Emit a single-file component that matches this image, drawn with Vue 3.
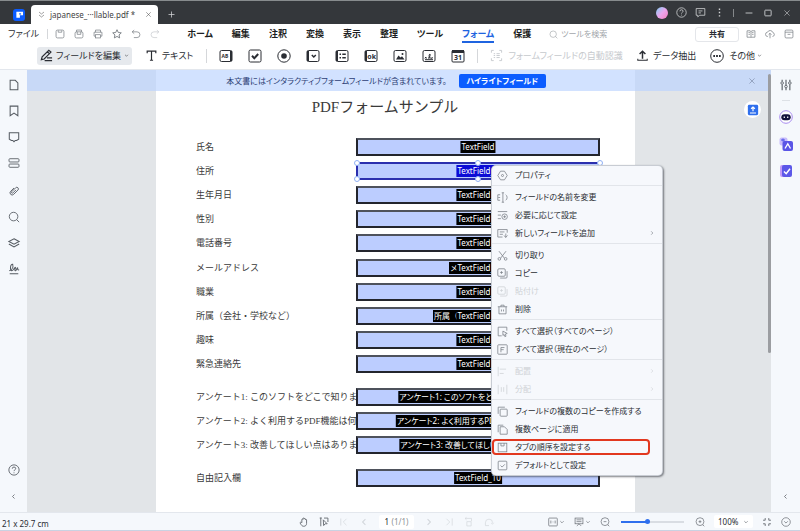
<script setup>
import { h, ref } from 'vue'

const icons = {
  logo: '<path fill="#fff" stroke="none" d="M3 3.500h8.500v4.500H7.500v3H3z"/><path fill="#0b5cff" stroke="none" d="M6.500 5.500h2.500v1.500h-2.500z"/>',
  pin: '<path d="M2 2l5 4 5-4M2 8l5 4 5-4"/>',
  close: '<path d="M2.500 2.500l9 9M11.500 2.500l-9 9"/>',
  plus: '<path stroke-width="1.500" d="M7 1v12M1 7h12"/>',
  save: '<rect x="1.500" y="1.500" width="11" height="11" rx="2"/><path d="M4.500 2v2.500h5V2"/>',
  saveAs: '<path d="M3.500 4V1.500h7V4"/><rect x="1.500" y="4" width="11" height="8.500" rx="2"/><path d="M4.500 4v3.500h5V4"/>',
  print: '<path d="M3.500 4.500v-3h7v3M3.500 10h-2V4.500h11V10h-2"/><rect x="3.500" y="8" width="7" height="4.500"/>',
  star: '<path stroke-width="1.300" d="M7 1l1.800 3.900 4.200.500-3.100 2.900.800 4.200L7 10.400l-3.700 2.100.800-4.200L1 5.400l4.200-.500z"/>',
  undo: '<path d="M4.500 1.500L1.500 4l3 2.500M2 4h6.500a4 4 0 010 8H4"/>',
  redo: '<path d="M9.500 1.500l3 2.500-3 2.500M12 4H5.500a4 4 0 000 8H10"/>',
  search: '<circle cx="6.500" cy="6.500" r="5"/><path d="M10 10l3 3"/>',
  help: '<circle cx="7" cy="7" r="6"/><path d="M5 5.500a2 2 0 114 0c0 1.200-2 1.300-2 2.800M7 9.800v1"/>',
  comment: '<path d="M1.500 2h11v8.500H6L3.500 12.500v-2h-2z"/><path d="M4.500 5h5M4.500 7.500h3"/>',
  dots: '<path stroke-width="1.800" d="M7 2v1.800M7 6.200V8M7 10.400v1.800"/>',
  minimize: '<path stroke-width="1.500" d="M1 7h12"/>',
  maximize: '<rect x="1.500" y="2" width="11" height="10" rx="1" stroke-width="1.500"/>',
  book: '<path d="M7 3v8.500M1.500 2.500H6L7 3.500l1-1h4.500v9H8l-1 .8-1-.8H1.500zM3.500 5h2M3.500 7.500h2M8.500 5h2M8.500 7.500h2"/>',
  cloud: '<path d="M4 10.500a3 3 0 01-.500-6 4 4 0 017.500.500 2.800 2.800 0 01-.500 5.500M7 6v7M5 8l2-2 2 2"/>',
  archive: '<rect x="1.500" y="1.500" width="11" height="11" rx="1.500"/><path d="M1.500 4.500h11M5 7.500h4"/>',
  pen: '<path stroke-width="1.300" d="M1.500 11.500l.8-3L9.500 1.300l2.300 2L4.500 10.800zM8 3l2.200 2.200M7.500 9.500H13M5 12.500h8"/>',
  text: '<path stroke-width="1.500" d="M1.500 4V1.500h11V4M7 1.500v11.500M5 13h4"/>',
  textField: '<rect x="1" y="1.500" width="12" height="11" rx="1.500"/><path stroke-width="2" d="M12 2v10"/><text x="6" y="9.200" text-anchor="middle" font-size="5" font-weight="700" fill="currentColor" stroke="none">AB</text>',
  checkbox: '<rect x="1" y="1" width="12" height="12" rx="1.500"/><path stroke-width="2" d="M4 6.800l2.300 2.400L10.200 5"/>',
  radio: '<circle cx="7" cy="7" r="6.200"/><circle cx="7" cy="7" r="2.800" fill="currentColor" stroke="none"/>',
  dropdown: '<rect x="1" y="1.500" width="12" height="11" rx="1.500"/><path stroke-width="2" d="M2 2v10"/><path stroke-width="1.500" d="M5.800 6l2 2 2-2"/>',
  list: '<rect x="1" y="1.500" width="12" height="11" rx="1.500"/><path stroke-width="2" d="M2 2v10"/><path stroke-width="1.500" d="M4.500 5.300H6M7.300 5.300h3.500M4.500 8.800H6M7.300 8.800h3.500"/>',
  button: '<rect x="1" y="1.500" width="12" height="11" rx="1.500"/><path stroke-width="2" d="M2 2v10"/><text x="7.700" y="9.700" text-anchor="middle" font-size="7" font-weight="700" fill="currentColor" stroke="none">ok</text>',
  image: '<rect x="1" y="1.500" width="12" height="11" rx="1.500"/><path fill="currentColor" stroke="none" d="M3 10.500l2.500-4 2 2 1.500-1.200 2.500 3.200z"/><circle cx="9.500" cy="5" r="1" fill="currentColor" stroke="none"/>',
  sign: '<rect x="1" y="1.500" width="12" height="11" rx="1.500"/><path d="M3 8l1.500 1.500M4.500 8L3 9.500M6 9.500c1.500-1 2.500-3 2-4.500-1 0-1.300 3 0 4.500 1-1.500 1.500-1 1.500 0l1.500-1M3 10.700h8"/>',
  date: '<rect x="1" y="1.500" width="12" height="11.500" rx="1"/><path stroke-width="3" d="M1 2.500h12"/><text x="7" y="11.300" text-anchor="middle" font-size="7" font-weight="700" fill="currentColor" stroke="none">31</text>',
  scan: '<path d="M1.500 4V1.500H4M10 1.500h2.500V4M12.500 10v2.500H10M4 12.500H1.500V10M4 5h1.500M7 5h3.500M4 7h1.500M7 7h3.500M4 9.200h1.500M7 9.200h3.500"/>',
  extract: '<path stroke-width="1.900" d="M7 11V1.800M3.300 5L7 1.500 10.700 5"/><path stroke-width="1.300" d="M1 11v2h12v-2"/>',
  more: '<circle cx="7" cy="7" r="6.300"/><path stroke-width="1.800" d="M3.300 7H5M6.100 7h1.800M9 7h1.700"/>',
  chevron: '<path stroke-width="1.500" d="M3 5l4 4 4-4"/>',
  right: '<path stroke-width="1.500" d="M5 3l4 4-4 4"/>',
  left: '<path stroke-width="1.500" d="M9 3L5 7l4 4"/>',
  page: '<path stroke-width="1.200" d="M2.500 1.500h6l3 3v8h-9z"/>',
  bookmark: '<path stroke-width="1.200" d="M2.500 1.300h9v11.200L7 9.500l-4.500 3z"/>',
  note: '<path stroke-width="1.200" d="M1.500 2h11v7.500L10 11H8.500L7 12.500 5.500 11H4L1.500 9.500z"/>',
  fields: '<rect x="1.200" y="2" width="11.600" height="3.800" rx="1"/><rect x="1.200" y="8.200" width="11.600" height="3.800" rx="1"/>',
  clip: '<g transform="rotate(45 7 7)"><path d="M4.500 4.500v5.500a2.500 2.500 0 005 0V3a1.900 1.900 0 00-3.800 0v6.500a1 1 0 002 0V4.500"/></g>',
  layers: '<path stroke-width="1.200" d="M7 2l6 3.200-6 3.200-6-3.200zM1 8.200l6 3.300 6-3.300"/>',
  scribble: '<path stroke-width="1.200" d="M1.500 9c3-1 5-4 4-7.500-3-.5-3.500 7-1 7.500 2 0 3-4 4-4s-1.500 3.500 0 4 1.500-3.500 2.500-3.500-1 3 2 2.500M2 12.500h10"/>',
  sliders: '<path stroke-width="1.300" d="M2.500 1v2M2.500 6.500V13M7 1v6M7 10.500V13M11.500 1v2M11.500 6.500V13"/><circle cx="2.500" cy="4.700" r="1.500"/><circle cx="7" cy="8.800" r="1.500"/><circle cx="11.500" cy="4.700" r="1.500"/>',
  robot: '<circle cx="7" cy="7" r="6.300" fill="#fff" stroke="#a88cf0"/><rect x="2.300" y="4.200" width="9.400" height="6" rx="3" fill="#12123c" stroke="none"/><path stroke="#fff" stroke-width="1.200" d="M5.300 6.500v1.500M8.700 6.500v1.500"/>',
  translate: '<rect x="0.500" y="0.500" width="8" height="8" rx="2" fill="#c9bdfb" stroke="none"/><rect x="3.500" y="4" width="10.500" height="10" rx="2" fill="#5a55e6" stroke="none"/><path stroke="#fff" stroke-width="1.300" d="M6 11.500L8.800 6.800l2.700 4.700"/><path stroke="#4a52e8" d="M2 3h4M4 1.500v3"/>',
  task: '<rect x="1" y="1" width="10" height="12" rx="2" fill="#c29bf7" stroke="none"/><rect x="3" y="1" width="10" height="12" rx="2" fill="#5c58e8" stroke="none"/><path stroke="#fff" stroke-width="1.500" d="M5 7.500l2.200 2.200 3.800-5"/>',
  upload: '<rect x="1" y="1" width="12" height="12" rx="1.500" fill="#2f6fed" stroke="none"/><path stroke="#fff" stroke-width="1.400" d="M7 8.500V3.500M4.800 5.500L7 3.500l2.200 2M3.500 10.500h7"/>',
  props: '<path d="M4.500 1.500h5L13 7l-3.500 5.500h-5L1 7z"/><circle cx="7" cy="7" r="1.300"/>',
  rename: '<path d="M4 3.500H1v7h3M1.500 7H4M7.500 1v12M6 1h3M6 13h3M11 3.500c2.500 1 2.500 6 0 7"/>',
  required: '<path d="M1 2h12M1 6.500h4M1 11h4"/><circle cx="9.700" cy="8.500" r="3.500"/><path d="M9.700 6.800v3.400M8 8.500h3.400"/>',
  addField: '<path d="M13 6V2H1v9.500h6M3.500 5h6M3.500 8h4M9 9.500l2 2.500 2.500-2.500M11.200 7v5"/>',
  cut: '<path d="M2.500 1.500l7 9M11.500 1.500l-7 9"/><circle cx="3" cy="11.300" r="1.700"/><circle cx="11" cy="11.300" r="1.700"/>',
  copy: '<rect x="1" y="1" width="9.500" height="9.500" rx="1.500"/><path d="M5.700 4v3.500M4 5.700h3.500M12.800 4v7.500a1.300 1.300 0 01-1.300 1.300H4"/>',
  trash: '<path d="M1 3.500h12M5 3.500v-2h4v2M2.500 3.500v9h9v-9M5.700 7v2.500M8.300 7v2.500"/>',
  selectAll: '<path d="M12.500 6V1.500h-11v11H6"/><path d="M7.500 6.500l5.500 3-2.500.8 1 2.700-1.500.5-1-2.700-1.500 1.200z"/>',
  selectPage: '<rect x="1" y="1" width="12" height="12" rx="1"/><path d="M5 10.500v-6h4.500M5 7.200h3.500"/>',
  align: '<path d="M1.500 1v12M3.500 4h8M3.500 9.500h5"/>',
  distribute: '<path d="M1.500 1v12M12.500 1v12M5.500 4v6M8.500 4v6"/>',
  copies: '<rect x="4" y="4" width="9" height="9" rx="1"/><path d="M10 1.500H1.500V10"/>',
  pages: '<path d="M4 3.500h5.500L13 7v6H4zM1.500 10.500v-9H8"/>',
  tabOrder: '<rect x="1.500" y="1.500" width="11" height="11"/><path d="M5 1.500V5h4M9 1.500V5"/>',
  preset: '<rect x="1.500" y="1.500" width="11" height="11" rx="1"/><path d="M4.500 7l2 2 3.500-3.500"/>',
  hand: '<path stroke-width="1.300" d="M4 8V3.500c0-1 1.500-1 1.500 0V2.200c0-1 1.700-1 1.700 0v.6c0-1 1.700-1 1.700 0v1.200c0-1 1.700-1 1.700 0V9c0 2.500-1.500 4-4 4-2 0-3-1-5-4.500-.5-1 .8-1.800 2.400-.5z"/>',
  cursor: '<path stroke-width="1.300" d="M2.500 1v12M1 1.500h3M7 1.500h5.500V7M6 4l5.500 5.500H8.500L6.500 12z"/>',
  first: '<path d="M2.500 2v10M10.500 2.500L6 7l4.500 4.500"/>',
  last: '<path d="M11.500 2v10M3.500 2.500L8 7l-4.500 4.500"/>',
  rotateL: '<path d="M1.500 2h9v4M4 6.500h6v6H4zM3.500 0.500L1.500 2l2 2"/>',
  rotateR: '<path d="M2 8a5 5 0 0110 0M2 8v4h5M10 8.500l2 1.500 1.500-2"/>',
  fit: '<rect x="1" y="1.500" width="12" height="11" rx="1"/><path d="M4 5v4M7 6v.5M7 8v.5M10 5v4"/>',
  view: '<rect x="1.500" y="1.500" width="11" height="8"/><path d="M3.500 4h7M3.500 6.500h7M4 12.500l3-3 3 3"/>',
  zoomOut: '<circle cx="7" cy="6.500" r="5.500"/><path d="M5 6.500h4M11 11l2 2"/>',
  zoomIn: '<circle cx="7" cy="6.500" r="5.500"/><path d="M5 6.500h4M7 4.500v4M11 11l2 2"/>',
  full: '<path stroke-width="1.300" d="M1.500 4.500h3v-3M9.500 1.500v3h3M12.500 9.500h-3v3M4.500 12.500v-3h-3"/>',
  expand: '<circle cx="7" cy="7" r="6"/><path d="M4.500 6L7 8.500 9.500 6"/>',
}

const Icon = (props) => h('svg', {
  class: 'icon',
  viewBox: '0 0 14 14',
  'aria-hidden': 'true',
  innerHTML: icons[props.name],
})
Icon.props = ['name']

const quickActions = [
  { icon: 'save', label: '保存' },
  { icon: 'saveAs', label: '別名で保存' },
  { icon: 'print', label: '印刷' },
  { icon: 'star', label: 'お気に入り' },
  { icon: 'undo', label: '元に戻す' },
  { icon: 'redo', label: 'やり直し', disabled: true },
]
const tabs = ['ホーム', '編集', '注釈', '変換', '表示', '整理', 'ツール', 'フォーム', '保護']
const activeTab = ref('フォーム')
const fieldTools = ['textField', 'checkbox', 'radio', 'dropdown', 'list', 'button', 'image', 'sign', 'date']
const sideGroups = [
  ['page', 'bookmark', 'note', 'fields'],
  ['clip', 'search', 'layers', 'scribble'],
]

const groups = [
  [
    { label: '氏名', tag: 'TextField' },
    { label: '住所', tag: 'TextField_2', selected: true },
    { label: '生年月日', tag: 'TextField_3' },
    { label: '性別', tag: 'TextField_4' },
    { label: '電話番号', tag: 'TextField_5' },
  ],
  [
    { label: 'メールアドレス', tag: 'TextField_6', back: 'メールアドレス' },
    { label: '職業', tag: 'TextField_7' },
    { label: '所属（会社・学校など）', tag: 'TextField_8', back: '所属（会社・学校など）' },
    { label: '趣味', tag: 'TextField_9' },
    { label: '緊急連絡先', tag: 'TextField_1' },
  ],
  [
    { label: 'アンケート1: このソフトをどこで知りましたか？', tag: 'アンケート1: このソフトをどこで知りましたか？' },
    { label: 'アンケート2: よく利用するPDF機能は何ですか？', tag: 'アンケート2: よく利用するPDF機能は何ですか？' },
    { label: 'アンケート3: 改善してほしい点はありますか？', tag: 'アンケート3: 改善してほしい点はありますか？' },
  ],
  [{ label: '自由記入欄', tag: 'TextField_10' }],
]

const menu = [
  [{ icon: 'props', text: 'プロパティ' }],
  [
    { icon: 'rename', text: 'フィールドの名前を変更' },
    { icon: 'required', text: '必要に応じて設定' },
    { icon: 'addField', text: '新しいフィールドを追加', sub: true },
  ],
  [
    { icon: 'cut', text: '切り取り' },
    { icon: 'copy', text: 'コピー' },
    { icon: 'copy', text: '貼付け', disabled: true },
    { icon: 'trash', text: '削除' },
  ],
  [
    { icon: 'selectAll', text: 'すべて選択（すべてのページ）' },
    { icon: 'selectPage', text: 'すべて選択（現在のページ）' },
  ],
  [
    { icon: 'align', text: '配置', sub: true, disabled: true },
    { icon: 'distribute', text: '分配', sub: true, disabled: true },
  ],
  [
    { icon: 'copies', text: 'フィールドの複数のコピーを作成する' },
    { icon: 'pages', text: '複数ページに適用' },
    { icon: 'tabOrder', text: 'タブの順序を設定する', marked: true },
    { icon: 'preset', text: 'デフォルトとして設定' },
  ],
]

const zoom = ref(41)
</script>

<template>
  <div class="app">
    <header class="titlebar">
      <span class="logo"><Icon name="logo" /></span>
      <div class="doc-tab">
        <Icon name="pin" />
        <span class="doc-name">japanese_···llable.pdf *</span>
        <button aria-label="タブを閉じる"><Icon name="close" /></button>
      </div>
      <button class="new-tab" aria-label="新しいタブ"><Icon name="plus" /></button>
      <div class="window-tools">
        <span class="avatar"></span>
        <button aria-label="ヘルプ"><Icon name="help" /></button>
        <button aria-label="フィードバック"><Icon name="comment" /></button>
        <button aria-label="その他"><Icon name="dots" /></button>
      </div>
      <div class="window-controls">
        <button aria-label="最小化"><Icon name="minimize" /></button>
        <button aria-label="最大化"><Icon name="maximize" /></button>
        <button aria-label="閉じる"><Icon name="close" /></button>
      </div>
    </header>

    <nav class="menubar">
      <button class="file">ファイル</button>
      <div class="quick">
        <button v-for="a in quickActions" :key="a.icon" :aria-label="a.label" :disabled="a.disabled">
          <Icon :name="a.icon" />
        </button>
      </div>
      <div class="tabs">
        <button v-for="t in tabs" :key="t" :class="{ active: t === activeTab }" @click="activeTab = t">{{ t }}</button>
      </div>
      <label class="search">
        <Icon name="search" />
        <input type="text" placeholder="ツールを検索" aria-label="ツールを検索">
      </label>
      <button class="share">共有</button>
      <div class="menubar-end">
        <button aria-label="リーダー"><Icon name="book" /></button>
        <button aria-label="クラウド"><Icon name="cloud" /></button>
        <button aria-label="折りたたむ"><Icon name="archive" /></button>
      </div>
    </nav>

    <div class="toolbar">
      <button class="tool edit"><Icon name="pen" />フィールドを編集<Icon name="chevron" class="tiny" /></button>
      <button class="tool text"><Icon name="text" />テキスト</button>
      <div class="field-tools">
        <button v-for="f in fieldTools" :key="f" :aria-label="f"><Icon :name="f" /></button>
      </div>
      <button class="tool auto" disabled><Icon name="scan" />フォームフィールドの自動認識</button>
      <button class="tool extract"><Icon name="extract" />データ抽出</button>
      <button class="tool others"><Icon name="more" />その他<Icon name="chevron" class="tiny" /></button>
    </div>

    <div class="body">
      <aside class="side">
        <div v-for="(g, i) in sideGroups" :key="i" class="side-group">
          <button v-for="s in g" :key="s" :aria-label="s"><Icon :name="s" /></button>
        </div>
        <div class="side-bottom">
          <button aria-label="ヘルプ"><Icon name="help" /></button>
          <button class="collapse" aria-label="折りたたむ"><Icon name="left" /></button>
        </div>
      </aside>

      <main class="canvas">
        <section class="page">
          <h1>PDFフォームサンプル</h1>
          <div v-for="(g, i) in groups" :key="i" class="group" :class="'group-' + i">
            <div v-for="(f, j) in g" :key="f.label" class="row">
              <label :for="`f-${i}-${j}`">{{ f.label }}</label>
              <div class="field" :class="{ selected: f.selected }">
                <input :id="`f-${i}-${j}`" type="text" readonly>
                <span v-if="f.back" class="tag back">{{ f.back }}</span>
                <span class="tag">{{ f.tag }}</span>
                <template v-if="f.selected">
                  <i v-for="n in 6" :key="n" class="handle" :class="'handle-' + n"></i>
                </template>
              </div>
            </div>
          </div>
        </section>

        <div class="notice">
          <p>本文書にはインタラクティブフォームフィールドが含まれています。</p>
          <button class="highlight">ハイライトフィールド</button>
          <button class="notice-close" aria-label="閉じる"><Icon name="close" /></button>
        </div>
        <button class="upload" aria-label="アップロード"><Icon name="upload" /></button>
        <span class="scroll-thumb"></span>

        <div class="context-menu" role="menu">
          <div v-for="(section, i) in menu" :key="i" class="menu-section">
            <button
              v-for="item in section"
              :key="item.text"
              role="menuitem"
              :class="{ marked: item.marked }"
              :disabled="item.disabled"
            >
              <Icon :name="item.icon" />
              <span>{{ item.text }}</span>
              <Icon v-if="item.sub" name="right" class="sub" />
            </button>
          </div>
        </div>
      </main>

      <aside class="side side-right">
        <button aria-label="プロパティ"><Icon name="sliders" /></button>
        <hr>
        <button class="ai" aria-label="AI アシスタント"><Icon name="robot" /></button>
        <button class="ai" aria-label="翻訳"><Icon name="translate" /></button>
        <button class="ai" aria-label="校正"><Icon name="task" /></button>
        <div class="side-bottom">
          <button class="collapse" aria-label="折りたたむ"><Icon name="left" /></button>
        </div>
      </aside>
    </div>

    <footer class="status">
      <span class="paper">21 x 29.7 cm</span>
      <div class="status-group">
        <button aria-label="手のひら"><Icon name="hand" /></button>
        <button aria-label="選択"><Icon name="cursor" /></button>
        <button disabled aria-label="最初のページ"><Icon name="first" /></button>
        <button disabled aria-label="前のページ"><Icon name="left" /></button>
        <label class="page-no"><input type="text" value="1" aria-label="ページ">(1/1)</label>
        <button disabled aria-label="次のページ"><Icon name="right" /></button>
        <button disabled aria-label="最後のページ"><Icon name="last" /></button>
        <button disabled aria-label="左に回転"><Icon name="rotateL" /></button>
        <button disabled aria-label="右に回転"><Icon name="rotateR" /></button>
      </div>
      <div class="status-view">
        <button aria-label="表示倍率"><Icon name="fit" /><Icon name="chevron" class="tiny" /></button>
        <button aria-label="ページ表示"><Icon name="view" /><Icon name="chevron" class="tiny" /></button>
        <button aria-label="縮小"><Icon name="zoomOut" /></button>
        <input v-model="zoom" class="zoom-range" type="range" min="0" max="100" aria-label="ズーム">
        <button aria-label="拡大"><Icon name="zoomIn" /></button>
        <span class="zoom-select">
          <select aria-label="倍率"><option>100%</option></select>
          <Icon name="chevron" class="tiny" />
        </span>
        <button class="full" aria-label="全画面"><Icon name="full" /></button>
        <button aria-label="展開"><Icon name="expand" /></button>
      </div>
    </footer>
  </div>
</template>

<style>
body {
  margin: 0;
}
</style>

<style scoped>
.app {
  display: flex;
  flex-direction: column;
  height: 100vh;
  overflow: hidden;
  background: #fff;
  color: #2a2d33;
  font-family: 'Noto Sans', 'Noto Sans CJK JP', sans-serif;
  font-size: 9px;
  line-height: 12px;
  font-feature-settings: 'palt';
}

button,
input,
select {
  margin: 0;
  padding: 0;
  border: 0;
  background: none;
  color: inherit;
  font: inherit;
  font-feature-settings: inherit;
  white-space: nowrap;
}

button {
  display: flex;
  align-items: center;
  justify-content: center;
  flex: none;
}

button:disabled {
  color: #c6c9cd;
}

.icon {
  display: block;
  flex: none;
  width: 11px;
  height: 11px;
  fill: none;
  stroke: currentColor;
  overflow: visible;
}

.icon.tiny {
  width: 6px;
  height: 6px;
}

/* title bar */
.titlebar {
  display: flex;
  align-items: center;
  flex: none;
  height: 23px;
  padding-right: 9px;
  border-top: 1px solid #878b8d;
  background: #34373b;
  color: #d4d6d8;
}

.logo {
  display: flex;
  align-items: center;
  justify-content: center;
  width: 12px;
  height: 12px;
  margin: 4px 6px 0 13px;
  border-radius: 3px;
  background: #0b5cff;
}

.doc-tab {
  display: flex;
  align-items: center;
  align-self: flex-end;
  box-sizing: border-box;
  width: 127px;
  height: 19px;
  padding: 0 6px 0 7px;
  border-radius: 4px 4px 0 0;
  background: #fff;
  color: #444;
  font-size: 8px;
}

.doc-tab .icon {
  width: 7px;
  height: 7px;
}

.doc-name {
  flex: 1;
  margin-left: 5px;
  white-space: nowrap;
}

.new-tab {
  margin: 4px 0 0 10px;
}

.new-tab .icon {
  width: 7px;
  height: 7px;
}

.window-tools,
.window-controls {
  display: flex;
  align-items: center;
}

.window-tools {
  gap: 8px;
  margin-left: auto;
  padding-right: 8px;
}

.window-controls {
  gap: 11px;
  padding-left: 12px;
  background: linear-gradient(#85888b, #85888b) 0 50% / 1px 8px no-repeat;
}

.window-controls .icon {
  width: 8px;
  height: 8px;
}

.avatar {
  width: 12px;
  height: 12px;
  border-radius: 50%;
  background: linear-gradient(135deg, #7ed3f7, #e9a6ee 50%, #f77fc0);
}

/* menu bar */
.menubar {
  display: flex;
  align-items: center;
  flex: none;
  height: 20px;
  padding: 0 6px 0 8px;
}

.quick {
  display: flex;
  gap: 9px;
  margin-left: 8px;
  padding-left: 7px;
  border-left: 1px solid #d5d7da;
  color: #777c82;
}

.quick .icon {
  width: 10px;
  height: 10px;
}

.tabs {
  display: flex;
  gap: 19px;
  margin-left: 27px;
  color: #1c1e22;
  font-weight: 700;
}

.tabs button {
  padding: 1px 0;
  border: solid transparent;
  border-width: 2px 0;
}

.tabs .active {
  border-bottom-color: #1f64e0;
  color: #1f64e0;
}

.search {
  display: flex;
  align-items: center;
  gap: 3px;
  margin-left: 18px;
  color: #a3a7ab;
  font-size: 8px;
}

.search .icon {
  width: 9px;
  height: 9px;
}

.search input {
  width: 60px;
}

.search input::placeholder {
  color: #a3a7ab;
}

.share {
  width: 44px;
  height: 15px;
  margin-left: auto;
  border: 1px solid #e4e6ea;
  border-radius: 3px;
  font-size: 8px;
  font-weight: 700;
}

.menubar-end {
  display: flex;
  gap: 9px;
  margin-left: 7px;
  color: #777c82;
}

.menubar-end .icon {
  width: 10px;
  height: 10px;
}

/* form toolbar */
.toolbar {
  display: flex;
  align-items: center;
  flex: none;
  height: 23px;
  padding: 0 38px 2px 37px;
}

.tool {
  gap: 5px;
}

.tool .icon,
.field-tools .icon {
  width: 14px;
  height: 14px;
}

.tool .icon.tiny {
  width: 5px;
  height: 5px;
}

.edit {
  gap: 3px;
  width: 95px;
  height: 18px;
  border-radius: 3px;
  background: #e6e9ed;
}

.edit .icon,
.auto .icon {
  width: 13px;
  height: 13px;
}

.text {
  margin-left: 14px;
}

.text .icon,
.extract .icon {
  width: 11px;
  height: 11px;
}

.field-tools {
  display: flex;
  gap: 15px;
  margin-left: 13px;
  padding: 0 12px;
  border: solid #d5d7da;
  border-width: 0 1px;
}

.auto {
  margin-left: 12px;
}

.extract {
  margin: 0 14px 0 auto;
}

.others .icon.tiny {
  margin-left: -3px;
}

/* body */
.body {
  display: flex;
  flex: 1;
  min-height: 0;
  border-top: 1px solid #e3e7ed;
}

.side {
  display: flex;
  flex-direction: column;
  align-items: center;
  flex: none;
  width: 27px;
  padding-top: 9px;
  background: #f5f8fc;
  color: #555b62;
}

.side .icon {
  width: 12px;
  height: 12px;
}

.side-group {
  display: flex;
  flex-direction: column;
  gap: 14px;
  margin-bottom: 16px;
}

.side-bottom {
  display: flex;
  flex-direction: column;
  align-items: center;
  gap: 17px;
  margin-top: auto;
  padding-bottom: 12px;
}

.side-bottom .collapse .icon {
  width: 7px;
  height: 7px;
}

.side-right {
  width: 29px;
}

.side-right hr {
  width: 8px;
  margin: 9px 0;
  border: 0;
  border-top: 1px solid #dde1e6;
}

.side-right .ai {
  margin-bottom: 13px;
}

.side-right .ai .icon {
  width: 14px;
  height: 14px;
}

.canvas {
  position: relative;
  flex: 1;
  min-width: 0;
  overflow: hidden;
  background: #e2e5e8;
}

.page {
  box-sizing: border-box;
  height: 100%;
  margin: 0 136px 0 129px;
  padding: 27px 35px 0 40px;
  background: #fff;
  color: #3a3a3a;
  font-family: 'Liberation Serif', 'Noto Sans CJK JP', serif;
  font-feature-settings: normal;
}

.page h1 {
  margin: 0 0 21px;
  padding-right: 26px;
  font-size: 15px;
  font-weight: 400;
  line-height: 20px;
  text-align: center;
}

.group {
  display: flex;
  flex-direction: column;
  gap: 6px;
}

.group-1 {
  margin-top: 7px;
}

.group-2,
.group-3 {
  margin-top: 15px;
}

.row {
  display: grid;
  grid-template-columns: 160px minmax(0, 1fr);
  align-items: center;
}

.row label {
  overflow: hidden;
  white-space: nowrap;
}

.field {
  position: relative;
  height: 18px;
  font-family: 'Noto Sans', 'Noto Sans CJK JP', sans-serif;
  font-size: 8px;
  font-feature-settings: 'palt';
}

.field input {
  display: block;
  box-sizing: border-box;
  width: 100%;
  height: 18px;
  border: 2px solid #23252d;
  border-top-color: #4e525c;
  background: #bccdff;
}

.tag {
  position: absolute;
  top: 3px;
  left: 50%;
  height: 12px;
  padding: 0 1px;
  background: #000;
  color: #fff;
  white-space: nowrap;
  transform: translateX(-50%);
}

.tag.back {
  font-feature-settings: normal;
}

.selected input {
  border-color: #2b2fae;
}

.selected .tag {
  background: #0b0bd6;
}

.handle {
  position: absolute;
  box-sizing: border-box;
  width: 6px;
  height: 6px;
  margin: -3px;
  border: 1px solid #8fb0f5;
  border-radius: 50%;
  background: #fff;
}

.handle-1 { top: 1px; left: 1px; }
.handle-2 { top: 1px; left: 50%; }
.handle-3 { top: 1px; left: 100%; }
.handle-4 { top: 17px; left: 1px; }
.handle-5 { top: 17px; left: 50%; }
.handle-6 { top: 17px; left: 100%; }

.notice {
  position: absolute;
  inset: 0 0 auto;
  display: flex;
  align-items: center;
  justify-content: center;
  gap: 12px;
  height: 21px;
  padding-right: 26px;
  background: rgba(186, 210, 255, 0.65);
  color: #2c3e74;
  font-size: 8px;
}

.notice p {
  margin: 0;
  white-space: nowrap;
}

.highlight {
  width: 87px;
  height: 14px;
  border-radius: 2px;
  background: #0b5cff;
  color: #fff;
  font-weight: 700;
}

.notice-close {
  position: absolute;
  right: 15px;
  color: #6f7d99;
}

.notice-close .icon {
  width: 8px;
  height: 8px;
}

.upload {
  position: absolute;
  top: 31px;
  right: 10px;
  width: 17px;
  height: 17px;
  border-radius: 50%;
  background: #fff;
}

.upload .icon {
  width: 12px;
  height: 12px;
}

.scroll-thumb {
  position: absolute;
  top: 4px;
  right: 0;
  width: 3px;
  height: 279px;
  border-radius: 2px;
  background: #9b9da1;
}

.context-menu {
  position: absolute;
  top: 96px;
  left: 465px;
  width: 170px;
  padding-bottom: 1px;
  border-radius: 4px;
  background: #f6f8fc;
  box-shadow: 0 0 0 1px #c8ccd3, 1px 1px 2px 1px rgba(40, 44, 52, 0.6);
  font-size: 8px;
}

.menu-section + .menu-section {
  margin-top: 1px;
  padding-top: 2px;
  border-top: 1px solid #e2e5ea;
}

.menu-section button {
  position: relative;
  justify-content: flex-start;
  gap: 7px;
  width: 100%;
  height: 18px;
  padding: 0 7px 0 5px;
}

.menu-section .icon {
  color: #7c8188;
}

.menu-section button:disabled,
.menu-section button:disabled .icon {
  color: #cfd2d6;
}

.menu-section .icon.sub {
  width: 6px;
  height: 6px;
  margin-left: auto;
}

.marked::after {
  content: '';
  position: absolute;
  inset: 1px 12px 1px 0;
  border: 2px solid #e2381f;
  border-radius: 4px;
}

/* status bar */
.status {
  display: flex;
  align-items: center;
  flex: none;
  box-sizing: border-box;
  height: 19px;
  padding: 0 9px 0 2px;
  border-top: 1px solid #e3e7ed;
  border-bottom: 1px solid #c9d2e2;
  background: #f5f8fc;
  font-size: 8px;
}

.status .icon {
  width: 10px;
  height: 10px;
  color: #686d74;
}

.status .icon.tiny {
  width: 6px;
  height: 6px;
}

.status button:disabled .icon {
  color: #d3d7dc;
}

.paper {
  padding-top: 4px;
}

.status-group {
  display: flex;
  align-items: center;
  gap: 10px;
  margin: 0 54px 0 auto;
}

.page-no {
  display: flex;
  align-items: center;
  justify-content: center;
  gap: 2px;
  width: 35px;
  height: 14px;
  border-radius: 2px;
  background: #fff;
  color: #8d9197;
}

.page-no input {
  width: 5px;
  color: #22252a;
}

.status-view {
  display: flex;
  align-items: center;
  gap: 9px;
}

.status-view button {
  gap: 1px;
}

.zoom-range {
  width: 63px;
  height: 10px;
  margin: 0 2px;
  appearance: none;
  background: linear-gradient(90deg, #2f6fed 41%, #d9dde3 41%) 0 50% / 100% 2px no-repeat;
}

.zoom-range::-webkit-slider-thumb {
  width: 5px;
  height: 5px;
  appearance: none;
  border-radius: 50%;
  background: #2f6fed;
}

.zoom-select {
  display: flex;
  align-items: center;
  box-sizing: border-box;
  width: 39px;
  height: 13px;
  padding: 0 4px;
  border-radius: 2px;
  background: #fff;
}

.zoom-select select {
  flex: 1;
  min-width: 0;
  appearance: none;
}
</style>
